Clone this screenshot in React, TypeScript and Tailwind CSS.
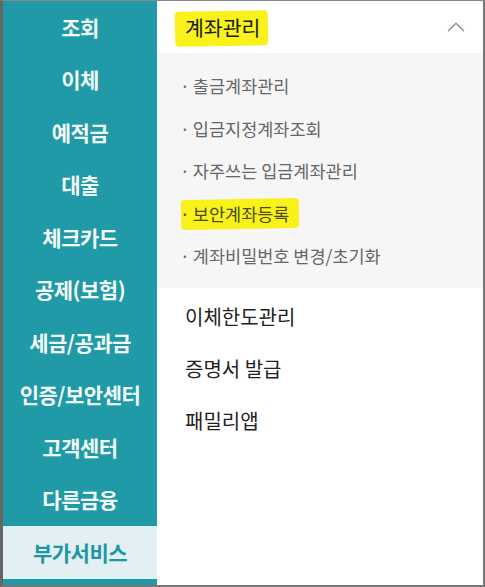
import { ChevronUp } from 'lucide-react'

const MENU = [
  '조회',
  '이체',
  '예적금',
  '대출',
  '체크카드',
  '공제(보험)',
  '세금/공과금',
  '인증/보안센터',
  '고객센터',
  '다른금융',
  '부가서비스',
]

const SUB_ITEMS = [
  { label: '출금계좌관리' },
  { label: '입금지정계좌조회' },
  { label: '자주쓰는 입금계좌관리' },
  { label: '보안계좌등록', marked: true },
  { label: '계좌비밀번호 변경/초기화' },
]

const OTHER_ITEMS = ['이체한도관리', '증명서 발급', '패밀리앱']

const ACTIVE = '부가서비스'

export default function App() {
  return (
    <div
      className="w-[485px] h-[587px] bg-white flex border-l-[3px] border-t border-r-2 border-b-2 border-l-[#666] border-t-[#888] border-r-[#777] border-b-[#777] overflow-hidden"
      style={{ fontFamily: '"Noto Sans CJK KR", "Noto Sans", sans-serif' }}
    >
      {/* left category list */}
      <aside className="w-[154px] shrink-0 bg-[#1f9aa6] flex flex-col">
        {MENU.map(item => (
          <div
            key={item}
            className={`h-[52.5px] shrink-0 flex items-center justify-center text-[21px] font-bold tracking-[-0.5px] ${
              item === ACTIVE ? 'bg-[#e3f0f3] text-[#1e97a3]' : 'text-[#f2f9f9]'
            }`}
          >
            {item}
          </div>
        ))}
      </aside>

      {/* right sub menu */}
      <section className="flex-1 flex flex-col">
        <div className="h-[52px] shrink-0 flex items-center justify-between pl-[28px] pr-[12px]">
          <span className="relative text-[20.5px] text-[#1a1a1a]">
            <span className="absolute left-[-10px] right-[-8px] top-[-1px] bottom-[-3px] bg-[#f8f21a] -rotate-1 rounded-sm" />
            <span className="relative">계좌관리</span>
          </span>
          <ChevronUp className="w-[30px] h-[30px] text-[#8a8a8a]" strokeWidth={1} />
        </div>

        <ul className="bg-[#f6f6f6] pt-[12px] pb-[10px] pl-[23px]">
          {SUB_ITEMS.map(item => (
            <li key={item.label} className="h-[42.5px] flex items-center text-[17.5px] text-[#666]">
              <span className="relative">
                {item.marked && (
                  <span className="absolute left-[1px] right-[-10px] top-[-2px] bottom-[-2px] bg-[#f8f21a] -rotate-1 rounded-sm" />
                )}
                <span className={`relative ${item.marked ? 'text-[#4a4a1a]' : ''}`}>
                  <span className="mr-[3px]">·</span>
                  {item.label}
                </span>
              </span>
            </li>
          ))}
        </ul>

        <ul className="pt-[3px] pl-[28px]">
          {OTHER_ITEMS.map(item => (
            <li key={item} className="h-[52px] flex items-center text-[20px] text-[#222]">
              {item}
            </li>
          ))}
        </ul>
      </section>
    </div>
  )
}
